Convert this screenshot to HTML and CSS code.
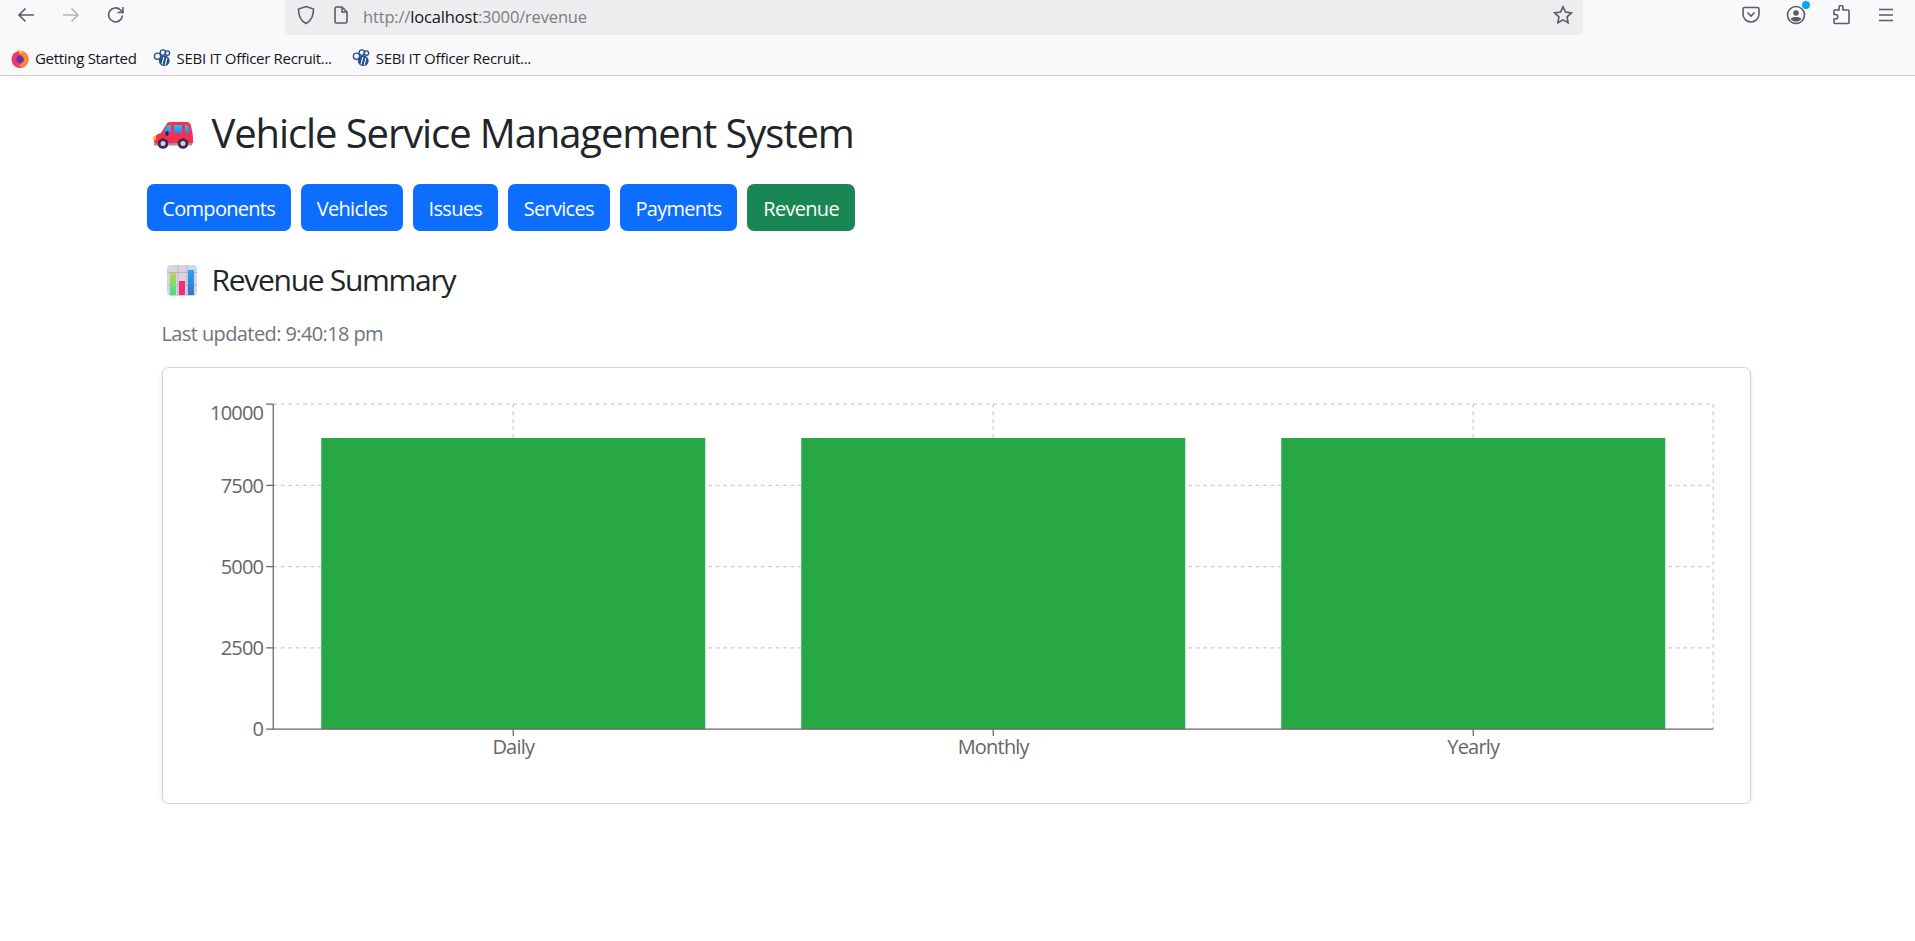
FILE: index.html
```html
<!DOCTYPE html>
<html lang="en">
<head>
    <meta charset="UTF-8">
    <meta name="viewport" content="width=device-width, initial-scale=1.0">
    <title>Vehicle Service Management System</title>
    <link rel="stylesheet" href="styles.css">
</head>
<body>
    <!-- Browser toolbar -->
    <header class="browser">
        <div class="toolbar">
            <div class="nav-icons">
                <svg class="icon" viewBox="0 0 20 20"><path d="M18 10H3M9.500 3.500L3 10l6.500 6.500"/></svg>
                <svg class="icon icon-off" viewBox="0 0 20 20"><path d="M2 10h15M10.500 3.500L17 10l-6.500 6.500"/></svg>
                <svg class="icon" viewBox="0 0 20 20"><path d="M16.500 10.500a7 7 0 1 1-2-5.500L17 7.500M17 2v5.500h-5.500"/></svg>
            </div>
            <div class="urlbar">
                <svg class="icon" viewBox="0 0 20 20"><path d="M10 1.500l7.500 2.500c0 7-1.500 11.500-7.500 14.500C4 15.500 2.500 11 2.500 4z"/></svg>
                <svg class="icon icon-page" viewBox="0 0 20 20"><path d="M4 3.500a1.500 1.500 0 0 1 1.500-1.500H11l5 5v9.500a1.500 1.500 0 0 1-1.500 1.500h-9A1.500 1.500 0 0 1 4 16.500zM11 2v5h5"/></svg>
                <span class="url">http://<b>localhost</b>:3000/revenue</span>
                <svg class="icon icon-star" viewBox="0 0 20 20"><path d="M10 1.800l2.500 5.300 5.800.8-4.200 4 1 5.800-5.100-2.800-5.100 2.800 1-5.800-4.200-4 5.800-.8z"/></svg>
            </div>
            <div class="tool-icons">
                <svg class="icon" viewBox="0 0 20 20"><path d="M3.500 2.500h13A1.500 1.500 0 0 1 18 4v5a8 8 0 0 1-16 0V4a1.500 1.500 0 0 1 1.500-1.500zM6.500 7.500L10 11l3.500-3.500"/></svg>
                <div class="account">
                    <svg class="icon" viewBox="0 0 20 20"><circle cx="10" cy="10" r="8.500"/><circle class="solid" cx="10" cy="8" r="2.800"/><path class="solid" d="M4.500 14c1-1.500 3-2 5.500-2s4.500.5 5.500 2a7 7 0 0 1-11 0z"/></svg>
                    <span class="dot"></span>
                </div>
                <svg class="icon" viewBox="0 0 20 20"><path d="M8 2.500a2 2 0 0 1 4 0V5h5a1 1 0 0 1 1 1v11.500a1 1 0 0 1-1 1H4a1 1 0 0 1-1-1V14h1.500a2 2 0 0 0 0-4.500H3V6a1 1 0 0 1 1-1h4z"/></svg>
                <svg class="icon" viewBox="0 0 20 20"><path d="M3 4.500h14M3 10h14M3 15.500h14"/></svg>
            </div>
        </div>
        <div class="bookmarks">
            <span class="bookmark bookmark-first">
                <svg class="bookmark-icon" viewBox="0 0 20 22">
                    <circle cx="10" cy="12.500" r="9.500" fill="#f0386b"/>
                    <path d="M10 3c4 0 8 3 9.500 8 .5 4-2 8.500-6 10-1 0-3 0-5-1l6-6z" fill="#ff8a2e"/>
                    <path d="M7 0c1 2 4 3 6.500 4.500L10 7z" fill="#ffc83a"/>
                    <circle cx="10" cy="12.500" r="4" fill="#6b2fb5"/>
                </svg>
                Getting Started
            </span>
            <span class="bookmark">
                <svg class="bookmark-icon" viewBox="0 0 20 20">
                    <circle cx="5" cy="8" r="3.500" class="sebi"/>
                    <circle cx="11" cy="4" r="3" class="sebi"/>
                    <circle cx="16" cy="4.500" r="2.500" class="sebi"/>
                    <circle cx="12.500" cy="13" r="6" fill="#23528f"/>
                    <path d="M10 17l2-8M13.500 18l2-8" stroke="#fff" stroke-width="1.200"/>
                </svg>
                SEBI IT Officer Recruit...
            </span>
            <span class="bookmark">
                <svg class="bookmark-icon" viewBox="0 0 20 20">
                    <circle cx="5" cy="8" r="3.500" class="sebi"/>
                    <circle cx="11" cy="4" r="3" class="sebi"/>
                    <circle cx="16" cy="4.500" r="2.500" class="sebi"/>
                    <circle cx="12.500" cy="13" r="6" fill="#23528f"/>
                    <path d="M10 17l2-8M13.500 18l2-8" stroke="#fff" stroke-width="1.200"/>
                </svg>
                SEBI IT Officer Recruit...
            </span>
        </div>
    </header>

    <div class="container">
        <h1 class="title">
            <svg class="emoji-car" viewBox="0 0 40 27">
                <defs>
                    <linearGradient id="glass" x1="0" y1="0" x2="0" y2="1">
                        <stop offset="0" stop-color="#27c0f5"/>
                        <stop offset="1" stop-color="#3a7fe8"/>
                    </linearGradient>
                </defs>
                <path d="M1 19c0-5 3-7 7-8l5-8c1-2 2-3 4-3h17c2 0 3 1 4 4 1 4 2 9 2 13v3c0 1-1 2-2 2H3c-1 0-2-1-2-3z" fill="#f5304f"/>
                <rect x="1" y="21" width="38" height="2.500" fill="#b2879f"/>
                <path d="M10 11l4-7c.5-1 1-1 2-1h2v8z" fill="url(#glass)"/>
                <path d="M21 3h8v8h-8z" fill="url(#glass)"/>
                <path d="M32 3h2c1 0 2 2 2.500 8H32z" fill="url(#glass)"/>
                <rect x="12.500" y="9" width="3" height="5" rx="1.500" fill="#3a2048"/>
                <rect x="0" y="14" width="3" height="4" fill="#ffc21f"/>
                <circle cx="10" cy="21.500" r="5.300" fill="#3a2a55"/>
                <circle cx="10" cy="21.500" r="2.500" fill="#d9cfe6"/>
                <circle cx="30" cy="21.500" r="5.300" fill="#3a2a55"/>
                <circle cx="30" cy="21.500" r="2.500" fill="#d9cfe6"/>
            </svg>
            Vehicle Service Management System
        </h1>

        <nav class="menu">
            <a class="btn">Components</a>
            <a class="btn">Vehicles</a>
            <a class="btn">Issues</a>
            <a class="btn">Services</a>
            <a class="btn">Payments</a>
            <a class="btn btn-active">Revenue</a>
        </nav>

        <section class="summary">
            <h2 class="subtitle">
                <svg class="emoji-chart" viewBox="0 0 30 31">
                    <defs>
                        <linearGradient id="bar-green" x1="0" y1="0" x2="0" y2="1">
                            <stop offset="0" stop-color="#b5d94a"/>
                            <stop offset="1" stop-color="#45dc8c"/>
                        </linearGradient>
                        <linearGradient id="bar-blue" x1="0" y1="0" x2="0" y2="1">
                            <stop offset="0" stop-color="#2aa3f5"/>
                            <stop offset="1" stop-color="#2f73d0"/>
                        </linearGradient>
                    </defs>
                    <rect width="30" height="31" rx="4" fill="#d9d4e2"/>
                    <path d="M0 7.500h30M0 20h30M11 0v31M20 0v31" stroke="#b8b2c4" stroke-width="1"/>
                    <rect x="3" y="8" width="6" height="22" fill="url(#bar-green)"/>
                    <rect x="12" y="16" width="6" height="14" fill="#ef2f78"/>
                    <rect x="21" y="5" width="6" height="25" fill="url(#bar-blue)"/>
                </svg>
                Revenue Summary
            </h2>
            <p class="updated">Last updated: 9:40:18 pm</p>

            <div class="card">
                <svg class="chart" viewBox="0 0 1587 435">
                    <g class="grid">
                        <path d="M110 36H1550M110 117.250H1550M110 198.500H1550M110 279.750H1550"/>
                        <path d="M350 36V361M830 36V361M1310 36V361M1550 36V361"/>
                    </g>
                    <rect class="bar" x="158" y="70" width="384" height="291"/>
                    <rect class="bar" x="638" y="70" width="384" height="291"/>
                    <rect class="bar" x="1118" y="70" width="384" height="291"/>
                    <g class="axis">
                        <path d="M110 36V361H1550"/>
                        <path d="M103 36H110M103 117.250H110M103 198.500H110M103 279.750H110M103 361H110"/>
                        <path d="M350 361V368M830 361V368M1310 361V368"/>
                    </g>
                    <g class="labels labels-y">
                        <text x="100" y="52">10000</text>
                        <text x="100" y="125">7500</text>
                        <text x="100" y="206">5000</text>
                        <text x="100" y="287">2500</text>
                        <text x="100" y="368">0</text>
                    </g>
                    <g class="labels labels-x">
                        <text x="350" y="386">Daily</text>
                        <text x="830" y="386">Monthly</text>
                        <text x="1310" y="386">Yearly</text>
                    </g>
                </svg>
            </div>
        </section>
    </div>
</body>
</html>
```

FILE: styles.css
```css
body {
    font-family: "Open Sans", "Noto Sans", sans-serif;
    margin: 0;
    background-color: #fff;
    color: #212529;
}

/* browser chrome */
.browser {
    background-color: #f9f9fb;
    border-bottom: 1px solid #ccc;
    height: 75px;
}
.toolbar {
    display: flex;
    height: 41px;
}
.icon {
    width: 20px;
    height: 20px;
    fill: none;
    stroke: #5b5b66;
    stroke-width: 1.600;
    flex-shrink: 0;
}
.icon-off {
    stroke: #b4b4ba;
}
.solid {
    fill: #5b5b66;
    stroke: none;
}
.nav-icons {
    display: flex;
    gap: 25px;
    padding: 5px 0 0 16px;
    width: 285px;
    box-sizing: border-box;
}
.urlbar {
    display: flex;
    align-items: flex-start;
    width: 1298px;
    height: 35px;
    box-sizing: border-box;
    padding: 5px 10px 0 11px;
    background-color: #ededf0;
    border-radius: 0 0 5px 5px;
}
.icon-page {
    margin-left: 15px;
}
.url {
    flex: 1;
    margin-left: 12px;
    font-size: 16.500px;
    line-height: 24px;
    letter-spacing: -0.010em;
    color: #7c7c85;
}
.url b {
    font-weight: 400;
    color: #15141a;
}
.tool-icons {
    display: flex;
    gap: 25px;
    padding: 5px 0 0 158px;
}
.account {
    position: relative;
    height: 20px;
}
.dot {
    position: absolute;
    top: -4px;
    right: -4px;
    width: 8px;
    height: 8px;
    border-radius: 50%;
    background-color: #0ea5f0;
}
.bookmarks {
    display: flex;
    gap: 20px;
    padding: 5px 0 0 11px;
    font-size: 15px;
    color: #15141a;
}
.bookmark {
    display: flex;
    align-items: center;
    gap: 6px;
    height: 24px;
    letter-spacing: -0.020em;
}
.bookmark-first {
    margin-right: -4px;
}
.bookmark-icon {
    width: 18px;
    height: 20px;
}
.sebi {
    fill: none;
    stroke: #23528f;
    stroke-width: 1.500;
}

/* page */
.container {
    width: 1619.500px;
    margin-left: 146.500px;
}
.title {
    display: flex;
    align-items: center;
    gap: 19px;
    margin: 33px 0 27px;
    padding-left: 6px;
    font-size: 40px;
    font-weight: 400;
    line-height: 48px;
    letter-spacing: -0.0275em;
}
.emoji-car {
    width: 40px;
    height: 27px;
    margin-top: 4px;
}
.menu {
    display: flex;
    gap: 10px;
}
.btn {
    display: block;
    box-sizing: border-box;
    padding: 2px 15.800px 0;
    height: 47px;
    line-height: 46px;
    font-size: 20px;
    letter-spacing: -0.035em;
    color: #fff;
    background-color: #0d6efd;
    border-radius: 7px;
}
.btn-active {
    background-color: #198754;
}
.summary {
    padding: 31px 15px 0;
}
.subtitle {
    display: flex;
    align-items: center;
    gap: 15px;
    margin: 0 0 21px 5px;
    font-size: 30px;
    font-weight: 400;
    line-height: 36px;
    letter-spacing: -0.043em;
}
.emoji-chart {
    width: 30px;
    height: 31px;
}
.updated {
    margin: 0 0 18px;
    font-size: 20px;
    line-height: 30px;
    letter-spacing: -0.030em;
    color: #6c757d;
}
.card {
    border: 1px solid #d3d3d3;
    border-radius: 7px;
    box-shadow: 0 2px 5px rgba(0, 0, 0, 0.1);
    height: 435px;
}
.chart {
    display: block;
    width: 100%;
    height: 100%;
}
.grid path {
    fill: none;
    stroke: #ccc;
    stroke-width: 1.250;
    stroke-dasharray: 3.750 3.750;
}
.bar {
    fill: #28a745;
}
.axis path {
    fill: none;
    stroke: #666;
    stroke-width: 1.250;
}
.labels text {
    fill: #666;
    font-size: 20px;
    letter-spacing: -0.040em;
}
.labels-y text {
    text-anchor: end;
}
.labels-x text {
    text-anchor: middle;
}
```
